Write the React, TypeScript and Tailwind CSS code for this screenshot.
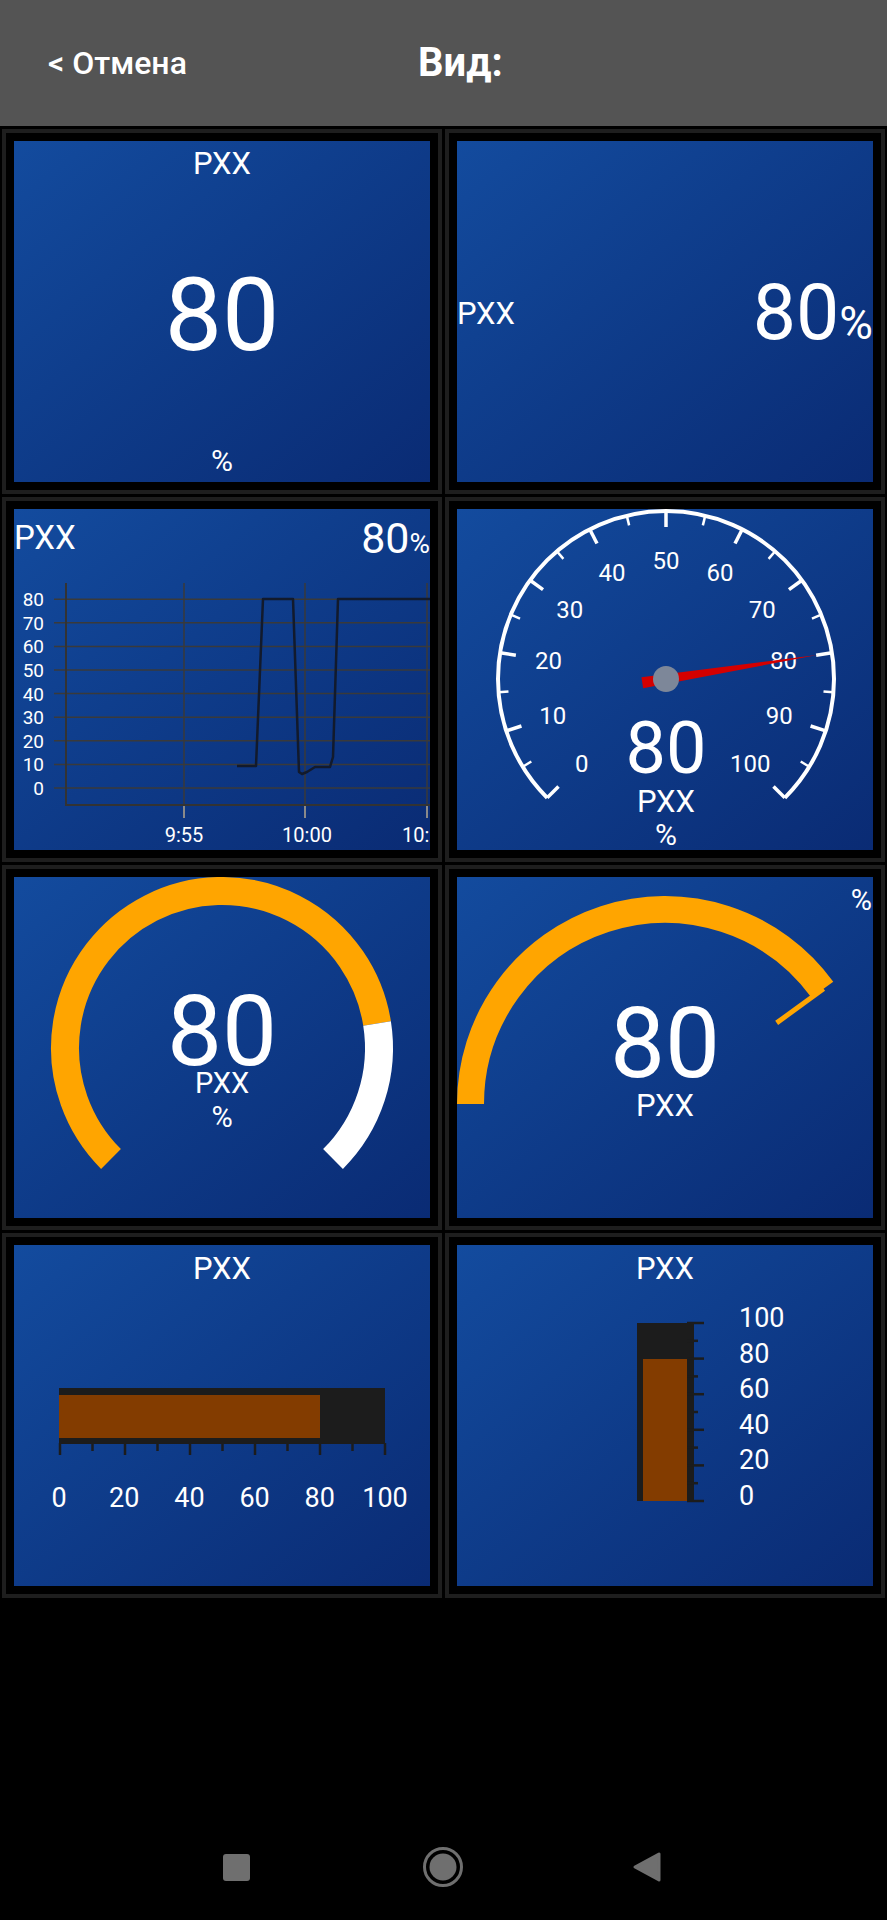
import React from 'react'

function polar(cx: number, cy: number, r: number, deg: number) {
  const a = (deg * Math.PI) / 180
  return [cx + r * Math.cos(a), cy - r * Math.sin(a)]
}

function Tile({ children }: { children: React.ReactNode }) {
  return (
    <div className="border-4 border-[#1e1e1e] bg-black p-2">
      <div className="h-[341px] overflow-hidden bg-linear-to-br from-[#134b9e] to-[#0a2b74] text-white">
        {children}
      </div>
    </div>
  )
}

function ChartTile() {
  const grid = [0, 10, 20, 30, 40, 50, 60, 70, 80]
  const y = (v: number) => 279 - v * 2.36
  return (
    <Tile>
      <div className="flex h-[56px] items-start justify-between">
        <span className="mt-[12px] text-[33px] leading-none">РХХ</span>
        <span className="mt-[8px] flex items-baseline leading-none">
          <span className="text-[43px]">80</span>
          <span className="text-[28px]">%</span>
        </span>
      </div>
      <svg width={416} height={285} viewBox="0 56 416 285">
        {grid.map((v) => (
          <g key={v}>
            <line x1={40} x2={416} y1={y(v)} y2={y(v)} stroke="#3a3a3a" strokeWidth={1.5} />
            <text x={30} y={y(v) + 7} fill="white" fontSize={19} textAnchor="end">
              {v}
            </text>
          </g>
        ))}
        {[170, 291, 413].map((x) => (
          <g key={x}>
            <line x1={x} x2={x} y1={74} y2={296} stroke="#3a3a3a" strokeWidth={1.5} />
            <line x1={x} x2={x} y1={296} y2={309} stroke="#8a8a8a" strokeWidth={2} />
          </g>
        ))}
        <line x1={52} x2={52} y1={74} y2={297} stroke="#333" strokeWidth={2} />
        <line x1={52} x2={416} y1={296} y2={296} stroke="#333" strokeWidth={2} />
        <text x={170} y={333} fill="white" fontSize={20} textAnchor="middle">9:55</text>
        <text x={293} y={333} fill="white" fontSize={20} textAnchor="middle">10:00</text>
        <text x={413} y={333} fill="white" fontSize={20} textAnchor="middle">10:05</text>
        <polyline
          points="223,257 242,257 249,90 279,90 285,263 288,265 293,263 301,258 316,258 319,248 324,90 416,90"
          fill="none"
          stroke="#121a2c"
          strokeWidth={2.5}
          strokeLinejoin="round"
        />
      </svg>
    </Tile>
  )
}

function SpeedoTile() {
  const cx = 209
  const cy = 170
  const R = 168
  const [sx, sy] = polar(cx, cy, R, 225)
  const [ex, ey] = polar(cx, cy, R, -45)
  const needle = 225 - 80 * 2.7
  const [tx, ty] = polar(cx, cy, 153, needle)
  const [bx, by] = polar(cx, cy, -24, needle)
  const [p1x, p1y] = polar(bx, by, 5.5, needle + 90)
  const [p2x, p2y] = polar(bx, by, 5.5, needle - 90)
  return (
    <Tile>
      <svg width={416} height={341} viewBox="0 0 416 341">
        <path d={`M ${sx} ${sy} A ${R} ${R} 0 1 1 ${ex} ${ey}`} fill="none" stroke="white" strokeWidth={4} />
        {Array.from({ length: 21 }).map((_, i) => {
          const deg = 225 - i * 13.5
          const major = i % 2 === 0
          const [x1, y1] = polar(cx, cy, R, deg)
          const [x2, y2] = polar(cx, cy, major ? 152 : 158, deg)
          return <line key={i} x1={x1} y1={y1} x2={x2} y2={y2} stroke="white" strokeWidth={major ? 3.5 : 2.5} />
        })}
        {Array.from({ length: 11 }).map((_, i) => {
          const [x, ly] = polar(cx, cy, 119, 225 - i * 27)
          return (
            <text key={i} x={x} y={ly + 8.5} fill="white" fontSize={24} textAnchor="middle">
              {i * 10}
            </text>
          )
        })}
        <polygon points={`${p1x},${p1y} ${tx},${ty} ${p2x},${p2y}`} fill="#d40000" />
        <circle cx={cx} cy={cy} r={13} fill="#7d8799" />
        <text x={cx} y={264} fill="white" fontSize={72} textAnchor="middle">80</text>
        <text x={cx} y={303} fill="white" fontSize={31} textAnchor="middle">РХХ</text>
        <text x={cx} y={336} fill="white" fontSize={30} textAnchor="middle">%</text>
      </svg>
    </Tile>
  )
}

function RingTile() {
  const cx = 208
  const cy = 171
  const R = 157
  const [sx, sy] = polar(cx, cy, R, 225)
  const [mx, my] = polar(cx, cy, R, 9)
  const [ex, ey] = polar(cx, cy, R, -45)
  return (
    <Tile>
      <svg width={416} height={341} viewBox="0 0 416 341">
        <path d={`M ${sx} ${sy} A ${R} ${R} 0 1 1 ${mx} ${my}`} fill="none" stroke="#ffa500" strokeWidth={28} />
        <path d={`M ${mx} ${my} A ${R} ${R} 0 0 1 ${ex} ${ey}`} fill="none" stroke="white" strokeWidth={28} />
        <text x={cx} y={188} fill="white" fontSize={98} textAnchor="middle">80</text>
        <text x={cx} y={216} fill="white" fontSize={29} textAnchor="middle">РХХ</text>
        <text x={cx} y={250} fill="white" fontSize={29} textAnchor="middle">%</text>
      </svg>
    </Tile>
  )
}

function HalfTile() {
  const cx = 208
  const cy = 227
  const R = 194.5
  const [sx, sy] = polar(cx, cy, R, 180)
  const [ex, ey] = polar(cx, cy, R, 36)
  const [m1x, m1y] = polar(cx, cy, 138, 36)
  const [m2x, m2y] = polar(cx, cy, 196, 36)
  return (
    <Tile>
      <svg width={416} height={341} viewBox="0 0 416 341">
        <path d={`M ${sx} ${sy} A ${R} ${R} 0 0 1 ${ex} ${ey}`} fill="none" stroke="#ffa500" strokeWidth={27} />
        <line x1={m1x} y1={m1y} x2={m2x} y2={m2y} stroke="#ffa500" strokeWidth={5} />
        <text x={415} y={33} fill="white" fontSize={29} textAnchor="end">%</text>
        <text x={cx} y={200} fill="white" fontSize={98} textAnchor="middle">80</text>
        <text x={cx} y={239} fill="white" fontSize={31} textAnchor="middle">РХХ</text>
      </svg>
    </Tile>
  )
}

function HBarTile() {
  const labels = [0, 20, 40, 60, 80, 100]
  return (
    <Tile>
      <div className="h-[44px] pt-[8px] text-center text-[31px] leading-none">РХХ</div>
      <svg width={416} height={297} viewBox="0 44 416 297">
        <rect x={45} y={143} width={326} height={56} fill="#1c1c1c" />
        <rect x={45} y={150} width={261} height={43} fill="#833c00" />
        {Array.from({ length: 11 }).map((_, i) => {
          const x = 46 + i * 32.5
          return <line key={i} x1={x} x2={x} y1={198} y2={i % 2 === 0 ? 210 : 206} stroke="#1c1c1c" strokeWidth={2.5} />
        })}
        {labels.map((v, i) => (
          <text key={v} x={45 + i * 65.2} y={262} fill="white" fontSize={27} textAnchor="middle">
            {v}
          </text>
        ))}
      </svg>
    </Tile>
  )
}

function VBarTile() {
  const labels = [0, 20, 40, 60, 80, 100]
  return (
    <Tile>
      <div className="h-[44px] pt-[8px] text-center text-[31px] leading-none">РХХ</div>
      <svg width={416} height={297} viewBox="0 44 416 297">
        <rect x={180} y={78} width={57} height={178} fill="#1c1c1c" />
        <rect x={186} y={114} width={44} height={142} fill="#833c00" />
        {Array.from({ length: 11 }).map((_, i) => {
          const ty = 256 - i * 17.8
          return <line key={i} x1={230} x2={i % 2 === 0 ? 247 : 241} y1={ty} y2={ty} stroke="#1c1c1c" strokeWidth={2.5} />
        })}
        {labels.map((v, i) => (
          <text key={v} x={282} y={260 - i * 35.6} fill="white" fontSize={27}>
            {v}
          </text>
        ))}
      </svg>
    </Tile>
  )
}

export default function App() {
  return (
    <div className="flex h-[1920px] w-[887px] flex-col bg-black font-[family-name:Roboto,sans-serif]">
      {/* Top bar */}
      <div className="flex h-[126px] shrink-0 items-center bg-[#545454] text-white">
        <div className="w-[418px] pl-[48px] text-[32px] font-medium leading-none">&lt; Отмена</div>
        <div className="text-[40px] font-bold leading-none">Вид:</div>
      </div>

      {/* Widgets */}
      <div className="grid grid-cols-2 gap-x-[3px] gap-y-[3px] px-[2px] pt-[3px]">
        <Tile>
          <div className="flex h-full flex-col items-center pt-[7px] pb-[6px]">
            <div className="text-[31px] leading-none">РХХ</div>
            <div className="flex flex-1 items-center pt-[4px] text-[102px] leading-none">80</div>
            <div className="text-[30px] leading-none">%</div>
          </div>
        </Tile>
        <Tile>
          <div className="flex h-full items-center justify-between pt-[3px]">
            <span className="text-[31px] leading-none">РХХ</span>
            <span className="flex items-baseline leading-none">
              <span className="text-[77px]">80</span>
              <span className="text-[46px]">%</span>
            </span>
          </div>
        </Tile>
        <ChartTile />
        <SpeedoTile />
        <RingTile />
        <HalfTile />
        <HBarTile />
        <VBarTile />
      </div>

      {/* Android nav */}
      <div className="mt-auto flex h-[106px] items-center">
        <div className="ml-[223px] size-[27px] rounded-[3px] bg-[#6f6f6f]" />
        <svg className="ml-[172px]" width={42} height={42} viewBox="0 0 42 42">
          <circle cx={21} cy={21} r={18.5} fill="none" stroke="#6f6f6f" strokeWidth={3} />
          <circle cx={21} cy={21} r={13.5} fill="#6f6f6f" />
        </svg>
        <svg className="ml-[168px]" width={29} height={32} viewBox="0 0 29 32">
          <path d="M3 16 L27 3 L27 29 Z" fill="#6f6f6f" stroke="#6f6f6f" strokeWidth={3} strokeLinejoin="round" />
        </svg>
      </div>
    </div>
  )
}
